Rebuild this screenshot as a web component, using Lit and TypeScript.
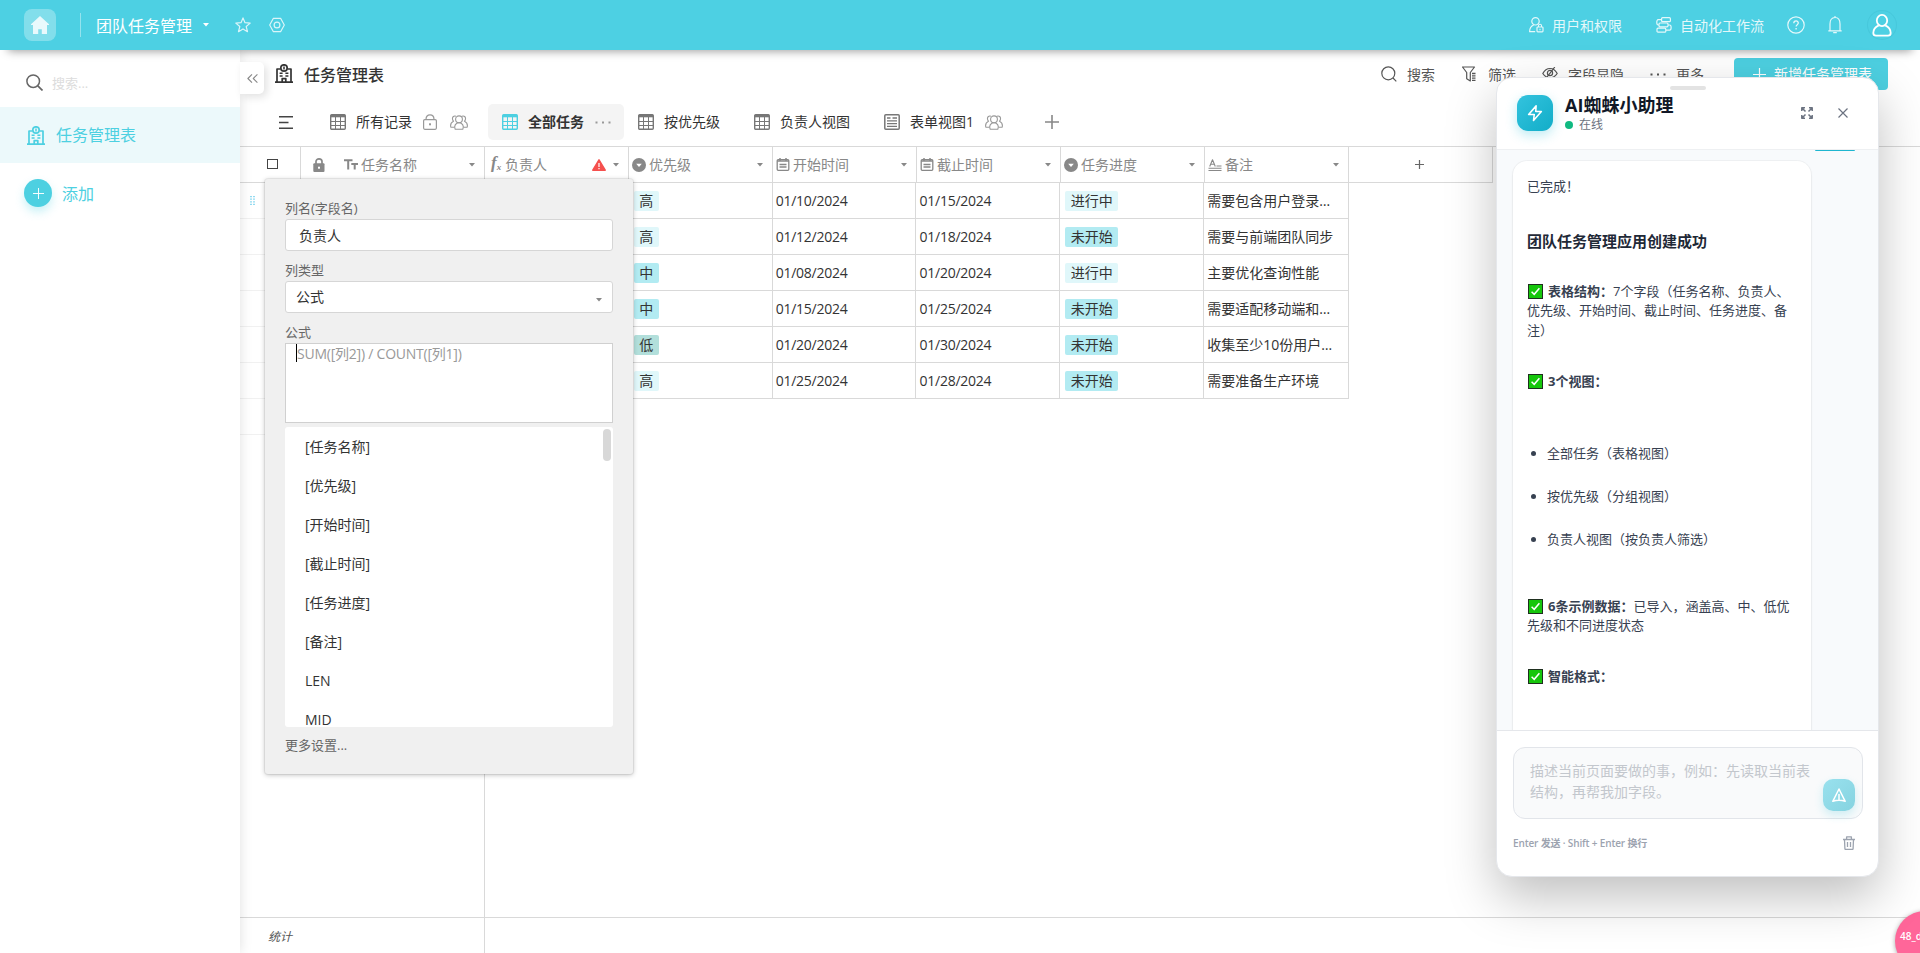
import { LitElement, html, svg, css } from "lit";
import { customElement } from "lit/decorators.js";

const ico = (w: number, h: number, vb: string, body: unknown) =>
  html`<svg width=${w} height=${h} viewBox=${vb} fill="none" stroke="currentColor" stroke-linejoin="round">${body}</svg>`;

const icons = {
  home: () => ico(18, 18, "0 0 18 18", svg`<path d="M9 0 L18 8.2 V9 H16 V18 H10.8 V13.2 H7.2 V18 H2 V9 H0 V8.2 Z" fill="currentColor" stroke="none"/>`),
  star: () => ico(16, 16, "0 0 16 16", svg`<path d="M8 .9l2 4.8 5.2.4-4 3.4 1.3 5.2L8 11.9l-4.500 2.800 1.300-5.200-4-3.400 5.200-.4z" stroke-width="1.200"/>`),
  hex: () => ico(16, 16, "0 0 16 16", svg`<path d="M4.400 1.300h7.200L15.300 8l-3.700 6.700H4.400L.7 8z" stroke-width="1.200"/><circle cx="8" cy="8" r="2.900" stroke-width="1.200"/>`),
  building: () => ico(18, 19, "0 0 18 19", svg`<g stroke-width="1.700"><path d="M0 18.100h18M2 18V5h3.400M16 18V5h-3.400M7.200 18v-3.400h3.600V18"/><circle cx="9" cy="4" r="3.200"/><path d="M9 2.400v3.200M4.600 9.200h3M10.400 9.200h3M4.600 12h3M10.400 12h3" stroke-width="1.500"/></g>`),
  search: (s = 17) => ico(s, s, "0 0 17 17", svg`<circle cx="7.200" cy="7.200" r="6.300" stroke-width="1.500"/><path d="M11.800 11.800l4.700 4.700" stroke-width="1.700"/>`),
  searchThin: () => ico(16, 16, "0 0 16 16", svg`<circle cx="7.300" cy="7.300" r="6.500" stroke-width="1.200"/><path d="M12 12l3.300 3.300" stroke-width="1.200"/>`),
  plus: (s: number, w = 1.4) => ico(s, s, "0 0 14 14", svg`<path d="M7 0v14M0 7h14" stroke-width=${w}/>`),
  collapse: () => ico(11, 9, "0 0 11 9", svg`<path d="M5 .4L.9 4.500 5 8.600M10.400.4L6.300 4.500l4.100 4.100" stroke-width="1.100"/>`),
  filter: () => ico(15, 16, "0 0 15 16", svg`<path d="M.5 1h12L8.300 6.500V15L4.700 12.800V6.500z" stroke-width="1.200"/><path d="M10 7.500h3.500M10 9.800h3.500M10 12.100h3.500M10 14.300h3.500" stroke-width="1.300"/>`),
  eye: () => ico(16, 12, "0 0 16 12", svg`<path d="M.8 6.500C2.500 3.300 5 1.500 8 1.500s5.500 1.800 7.200 5C13.500 9 11 10.800 8 10.800S2.500 9 .8 6.500z" stroke-width="1.200"/><circle cx="8" cy="6" r="2.600" stroke-width="1.200"/><path d="M12.800 0L3.500 12" stroke-width="1.200"/>`),
  dots: (s = 16) => ico(s, 3, "0 0 16 3", svg`<path d="M.5 .5h2v2h-2zM7 .5h2v2H7zM13.500.5h2v2h-2z" fill="currentColor" stroke="none"/>`),
  lines: () => ico(14, 13, "0 0 14 13", svg`<path d="M0 .75h14M0 6.500h9.500M0 12.250h14" stroke-width="1.300"/>`),
  table: () => ico(16, 16, "0 0 16 16", svg`<rect x=".7" y=".7" width="14.600" height="14.600" rx="1" stroke-width="1.400"/><path d="M1 2h14" stroke-width="2.600"/><path d="M1 7.500h14M1 11.500h14M5.500 3v12M10.500 3v12" stroke-width="1"/>`),
  form: () => ico(16, 16, "0 0 16 16", svg`<rect x=".8" y=".8" width="14.400" height="14.400" rx="1" stroke-width="1.500"/><path d="M3 4h3.500M3 6.800h10M3 9.600h10M3 12.400h10M8.500 4h4.500" stroke-width="1.300"/>`),
  lockOpen: () => ico(14, 16, "0 0 14 16", svg`<rect x=".6" y="5.600" width="12.800" height="9.700" rx="1.200" stroke-width="1.200"/><path d="M3 5.400C3 2.400 4.600.9 7 .9s4 1.500 4 4.500" stroke-width="1.200"/><rect x="6" y="9.300" width="2" height="2" fill="currentColor" stroke="none"/>`),
  people: () => ico(18, 15, "0 0 18 15", svg`<g stroke-width="1.100"><circle cx="9" cy="4.300" r="3.400"/><path d="M5.200 14.200c-1.500-3 .3-6.400 3.800-6.400s5.300 3.400 3.800 6.400z"/><path d="M6 1.300C4 .2 2.200 2 2.500 4c.1 1 .5 1.700 1 2.200C1.200 7.300.2 9.500.8 12.200h3.300M12 1.300C14 .2 15.800 2 15.500 4c-.1 1-.5 1.700-1 2.200 2.300 1.100 3.300 3.300 2.700 6h-3.300"/></g>`),
  lock: () => ico(12, 14, "0 0 12 14", svg`<rect x=".3" y="5.300" width="11.200" height="8.700" rx="1" fill="currentColor" stroke="none"/><path d="M3 6V3.600a3 2.700 0 0 1 6 0V6" stroke-width="1.700"/><rect x="5" y="8.700" width="2" height="2" fill="#fff" stroke="none"/>`),
  text: () => ico(14, 11, "0 0 14 11", svg`<path d="M0 1.200h8.500M4.200 1v9.500M7.300 4.900H14M10.700 4.900v5.600" stroke-width="2"/>`),
  select: () => ico(14, 14, "0 0 14 14", svg`<circle cx="7" cy="7" r="7" fill="currentColor" stroke="none"/><path d="M4.200 5.700h5.600L7 8.900z" fill="#fff" stroke="none"/>`),
  date: () => ico(13, 13, "0 0 13 13", svg`<rect x=".7" y="1.700" width="11.600" height="10.600" rx="1" stroke-width="1.300"/><path d="M.7 3h11.600M3.500 0v3M9.500 0v3" stroke-width="1.500"/><path d="M3 6.500h7M3 9h7" stroke-width="1.300"/>`),
  note: () => ico(13, 12, "0 0 13 12", svg`<path d="M1.200 7.500L4 .8l2.800 6.700M2.200 5.300h3.600M8 7h5M0 9.300h13M0 11.500h13" stroke-width="1.100"/>`),
  warn: () => ico(14, 12, "0 0 14 12", svg`<path d="M7 .8L13.200 11.200H.8z" fill="currentColor" stroke-width="1.500"/><path d="M7 4v4M7 9v1.200" stroke="#fff" stroke-width="1.200"/>`),
  caret: () => ico(6, 4, "0 0 6 4", svg`<path d="M0 0h6L3 3.500z" fill="currentColor" stroke="none"/>`),
  grip: () => ico(5, 9, "0 0 5 9", svg`<path d="M1 0v9M4 0v9" stroke-width="1.200" stroke-dasharray="1.200 1.400"/>`),
  userLock: () => ico(15, 16, "0 0 15 16", svg`<circle cx="6.500" cy="4.300" r="3.700" stroke-width="1.200"/><path d="M4.700 8C2 9 .6 11 .6 14.700h5.600" stroke-width="1.200"/><rect x="8" y="10" width="6" height="4.800" rx=".8" stroke-width="1.200"/><path d="M9.500 10V8.700a1.500 1.500 0 0 1 3 0V10M11 11.700v1.500" stroke-width="1.100"/>`),
  flow: () => ico(16, 16, "0 0 16 16", svg`<g stroke-width="1.200"><rect x="5.600" y=".7" width="8.800" height="4" rx="1"/><rect x="3" y="6" width="9" height="3.800" rx="1"/><rect x="1" y="11.200" width="8.800" height="4" rx="1"/><path d="M5.500 2.700H2.200C.3 2.700.3 8 2.200 8H3M12 8h1.700c1.900 0 1.900 5.200 0 5.200H10"/></g>`),
  help: () => ico(18, 18, "0 0 18 18", svg`<circle cx="9" cy="9" r="8.200" stroke-width="1.200"/><path d="M6.800 7.200c0-3 4.500-3 4.500-.2 0 1.700-2.200 1.700-2.200 3.600M9.100 12v1.400" stroke-width="1.300"/>`),
  bell: () => ico(14, 18, "0 0 14 18", svg`<path d="M.3 14.800h13.400M2 14.600V8c0-4 1.600-6.500 5-6.500S12 4 12 8v6.600M7 0v1.500M5.200 16.700h3.600" stroke-width="1.200"/>`),
  user: () => ico(20, 23, "0 0 20 23", svg`<ellipse cx="10" cy="6.500" rx="5.200" ry="5.600" stroke-width="1.800"/><path d="M6.800 11.300C3.300 12.800 1.300 15.500 1.300 19c0 2 .8 2.700 2.700 2.700h12c1.900 0 2.700-.7 2.700-2.700 0-3.500-2-6.200-5.500-7.700" stroke-width="1.800"/>`),
  bolt: () => ico(18, 18, "0 0 24 24", svg`<path d="M13.500 2.500L3.500 14H11l-1 8L20.500 10H13z" stroke-width="2.100" stroke-linecap="round"/>`),
  expand: () => ico(12, 12, "0 0 12 12", svg`<path d="M.8 4V.8H4M8 .8h3.200V4M11.200 8v3.200H8M4 11.200H.8V8M1 1l3.500 3.500M11 1L7.500 4.500M11 11L7.500 7.500M1 11l3.500-3.500" stroke-width="1.500"/>`),
  close: () => ico(10, 10, "0 0 10 10", svg`<path d="M.5.5l9 9M9.500.5l-9 9" stroke-width="1.200"/>`),
  check: () => html`<svg class="emoji" role="img" aria-label="✅" width="15" height="15" viewBox="0 0 15 15"><rect x=".5" y=".5" width="14" height="14" fill="#16c60c" stroke="#1f2f1f"/><path d="M3.600 7.800l2.600 2.500 5.200-6" fill="none" stroke="#fff" stroke-width="1.500"/></svg>`,
  send: () => ico(14, 15, "0 0 14 15", svg`<path d="M7 1L13.200 13.300C9 12 5 12 .8 13.300zM7 6v6" stroke-width="1.500"/>`),
  trash: () => ico(12, 14, "0 0 12 14", svg`<path d="M0 3.500h12M1.500 3.500l.4 9c0 .7.400 1 1 1h6.200c.6 0 1-.3 1-1l.4-9M3.600 3.300V.9h4.800v2.400M4.500 6v5M7.500 6v5" stroke-width="1.300"/>`),
};

const FONT = css`"Open Sans", "Noto Sans CJK SC", sans-serif`;

@customElement("top-bar")
class TopBar extends LitElement {
  static styles = css`
    :host { display: flex; align-items: center; height: 50px; box-sizing: border-box; padding: 0 24px; background: #4dd0e3; color: #fff; font: 16px/24px ${FONT}; }
    svg { display: block; flex: none; }
    .home { display: grid; place-items: center; width: 32px; height: 32px; border-radius: 8px; background: rgba(255,255,255,.3); color: #e8f9fc; }
    .sep { width: 1px; height: 24px; margin: 0 15px 0 24px; background: rgba(255,255,255,.4); }
    .name { margin-top: 2px; }
    .caret { margin: 0 26px 0 11px; }
    .dim { opacity: .8; margin-right: 18px; }
    .links { margin-left: auto; display: flex; align-items: center; font-size: 14px; opacity: .85; }
    .links span { margin: 2px 34px 0 8px; }
    .links .last { margin-right: 23px; }
    .bell { margin: 0 26px 0 23px; }
    .avatar { display: grid; place-items: center; width: 28px; height: 28px; border-radius: 50%; box-shadow: 0 0 0 1px rgba(0,120,140,.09); }
  `;
  render() {
    return html`
      <div class="home">${icons.home()}</div><div class="sep"></div>
      <div class="name">团队任务管理</div><div class="caret">${icons.caret()}</div>
      <div class="dim">${icons.star()}</div><div class="dim">${icons.hex()}</div>
      <div class="links">
        ${icons.userLock()}<span>用户和权限</span>
        ${icons.flow()}<span class="last">自动化工作流</span>
        ${icons.help()}<div class="bell">${icons.bell()}</div>
      </div>
      <div class="avatar">${icons.user()}</div>`;
  }
}

@customElement("side-nav")
class SideNav extends LitElement {
  static styles = css`
    :host { display: block; width: 240px; flex: none; background: #fff; font: 16px/24px ${FONT}; color: #4dd0e1; }
    svg { display: block; }
    .row { display: flex; align-items: center; }
    .search { height: 57px; padding: 7px 0 0 26px; box-sizing: border-box; gap: 9px; color: #666; }
    .search span { font-size: 13px; color: #dcdcdc; margin-top: 2px; }
    .item { height: 56px; padding-left: 27px; gap: 11px; background: #ecf9fb; }
    .add { padding: 16px 0 0 24px; gap: 10px; }
    .dot { width: 28px; height: 28px; border-radius: 50%; background: #4dd0e1; color: #fff; display: grid; place-items: center; box-shadow: 0 5px 10px rgba(77,208,225,.3); }
    .add span { margin-top: 1px; }
  `;
  render() {
    return html`
      <div class="row search">${icons.search()}<span>搜索...</span></div>
      <div class="row item">${icons.building()}<span>任务管理表</span></div>
      <div class="row add"><div class="dot">${icons.plus(11, 1.2)}</div><span>添加</span></div>`;
  }
}

type Row = [string, string, string, string, string];
const ROWS: Row[] = [
  ["高", "01/10/2024", "01/15/2024", "进行中", "需要包含用户登录、注册"],
  ["高", "01/12/2024", "01/18/2024", "未开始", "需要与前端团队同步"],
  ["中", "01/08/2024", "01/20/2024", "进行中", "主要优化查询性能"],
  ["中", "01/15/2024", "01/25/2024", "未开始", "需要适配移动端和桌面端"],
  ["低", "01/20/2024", "01/30/2024", "未开始", "收集至少10份用户反馈"],
  ["高", "01/25/2024", "01/28/2024", "未开始", "需要准备生产环境"],
];
const TONE: Record<string, string> = { 高: "light", 进行中: "light", 中: "mid", 未开始: "mid", 低: "deep" };

@customElement("task-grid")
class TaskGrid extends LitElement {
  static styles = css`
    :host { display: flex; flex-direction: column; flex: 1; border-top: 1px solid #d9d9d9; font: 14px/20px ${FONT}; color: #333; min-height: 0; }
    svg { display: block; flex: none; }
    .body { flex: 1; display: flex; }
    .fixed { width: 244px; border-right: 1px solid #d9d9d9; }
    .head { display: flex; height: 35px; border-bottom: 1px solid #d9d9d9; color: #888; }
    .pick { width: 61px; border-right: 1px solid #d9d9d9; display: flex; box-sizing: border-box; padding: 12px 0 0 27px; }
    .box { width: 9px; height: 8px; border: 1px solid #444; }
    .h { display: flex; align-items: center; box-sizing: border-box; padding: 0 9px 0 3px; gap: 3px; border-right: 1px solid #d9d9d9; }
    .h > svg:first-child { width: 14px; color: #888; }
    .h span { flex: 1; }
    .h .fx { font: italic 600 17px/20px "Liberation Serif", serif; flex: none; width: 14px; padding-left: 3px; box-sizing: border-box; white-space: nowrap; }
    .fx sub { font-size: 9px; vertical-align: -2px; }
    .warn { color: #f5504e; margin-right: 4px; }
    .name { flex: 1; padding-left: 11px; border: 0; }
    .name .gap { flex: none; width: 12px; }
    .blank { height: 35px; border-bottom: 1px solid #f1f1f1; display: flex; align-items: center; padding-left: 10px; color: #4dc4e8; }
    .cols { flex: 1; }
    .cols .head { width: 1008px; }
    .cols .h, .r > div { width: 144px; }
    .cols .h:last-child { justify-content: center; padding: 0 2px 0 0; color: #666; }
    .cols .h:last-child > svg { width: 9px; color: #666; }
    .r { display: flex; width: 863px; height: 35px; border-bottom: 1px solid #d9d9d9; border-right: 1px solid #d9d9d9; }
    .r > div { box-sizing: border-box; border-right: 1px solid #d9d9d9; padding: 8px 12px 0 3px; white-space: nowrap; overflow: hidden; text-overflow: ellipsis; }
    .r > div:last-child { border: 0; }
    .r .num { letter-spacing: -.25px; }
    .r .tg { padding-left: 5px; }
    .tag { display: inline-block; height: 20px; padding: 0 5.500px; border-radius: 2px; }
    .light { background: #e0f7fa; } .mid { background: #b2ebf2; } .deep { background: #b2dfdb; }
    .foot { display: flex; height: 35px; border-top: 1px solid #d9d9d9; font: italic 12px/37px ${FONT}; color: #555; }
    .foot .fixed { box-sizing: border-box; width: 245px; padding-left: 28px; }
  `;
  head(icon: unknown, label: string, warn = false) {
    return html`<div class="h">${icon}<span>${label}</span>${warn ? html`<div class="warn">${icons.warn()}</div>` : ""}${icons.caret()}</div>`;
  }
  render() {
    return html`
      <div class="body">
        <div class="fixed">
          <div class="head"><div class="pick"><div class="box"></div></div>
            <div class="h name">${icons.lock()}<div class="gap"></div>${icons.text()}<span>任务名称</span>${icons.caret()}</div></div>
          ${[0, 1, 2, 3, 4, 5, 6].map((i) => html`<div class="blank">${i === 0 ? icons.grip() : ""}</div>`)}
        </div>
        <div class="cols">
          <div class="head">
            ${this.head(html`<div class="fx">f<sub>x</sub></div>`, "负责人", true)}
            ${this.head(icons.select(), "优先级")}${this.head(icons.date(), "开始时间")}
            ${this.head(icons.date(), "截止时间")}${this.head(icons.select(), "任务进度")}
            ${this.head(icons.note(), "备注")}
            <div class="h">${icons.plus(9, 1.9)}</div>
          </div>
          ${ROWS.map(([p, a, b, s, n]) => html`<div class="r"><div></div>
            <div class="tg"><span class="tag ${TONE[p]}">${p}</span></div>
            <div class="num">${a}</div><div class="num">${b}</div>
            <div class="tg"><span class="tag ${TONE[s]}">${s}</span></div><div>${n}</div></div>`)}
        </div>
      </div>
      <div class="foot"><div class="fixed">统计</div></div>`;
  }
}

@customElement("field-editor")
class FieldEditor extends LitElement {
  static styles = css`
    :host { display: block; box-sizing: border-box; width: 368px; height: 595px; padding: 19px 20px 0 20px; background: #f0f0f0; border-radius: 3px; box-shadow: 0 0 0 1px rgba(0,0,0,.05), 0 1px 5px rgba(0,0,0,.25); font: 14px/20px ${FONT}; color: #333; }
    .label { font-size: 13px; color: #666; height: 21px; line-height: 20px; }
    .field { box-sizing: border-box; height: 32px; border: 1px solid #d6d6d6; border-radius: 3px; background: #fff; padding: 6px 11px 0 13px; margin-bottom: 9px; display: flex; justify-content: space-between; }
    .sel { padding: 5px 10px 0; }
    .sel svg { margin-top: 11px; color: #888; }
    .area { box-sizing: border-box; height: 80px; border: 1px solid #d0d0d0; background: #fff; color: #999; padding-left: 10px; }
    .area span { display: inline-block; border-left: 1px solid #000; height: 18px; line-height: 20px; letter-spacing: -.23px; }
    .listing { margin-top: 4px; height: 300px; box-sizing: border-box; background: #fff; border-radius: 3px; overflow: hidden; display: flex; justify-content: space-between; padding: 2px 2px 0 20px; }
    .listing .o { height: 39px; line-height: 35px; color: #333; }
    .bar { width: 8px; height: 32px; border-radius: 4px; background: #d8d8d8; }
    .more { margin-top: 8px; font-size: 13px; color: #666; }
  `;
  render() {
    return html`
      <div class="label">列名(字段名)</div><div class="field">负责人</div>
      <div class="label">列类型</div><div class="field sel">公式${icons.caret()}</div>
      <div class="label">公式</div><div class="area"><span>SUM([列2]) / COUNT([列1])</span></div>
      <div class="listing"><div>${["[任务名称]", "[优先级]", "[开始时间]", "[截止时间]", "[任务进度]", "[备注]", "LEN", "MID"].map((o) => html`<div class="o">${o}</div>`)}</div><div class="bar"></div></div>
      <div class="more">更多设置...</div>`;
  }
}

@customElement("ai-assistant")
class AiAssistant extends LitElement {
  static styles = css`
    :host { display: flex; flex-direction: column; box-sizing: border-box; width: 383px; height: 800px; background: #fff; border: 1px solid #e5e7eb; border-radius: 16px; overflow: hidden; box-shadow: 0 20px 50px rgba(0,0,0,.25); font: 13px/19.5px ${FONT}; color: #374151; }
    svg { display: block; flex: none; }
    .head { height: 71px; border-bottom: 1px solid #eef0f2; display: grid; grid-template-rows: 16px 1fr; }
    .handle { width: 36px; height: 4px; border-radius: 2px; background: #e3e3e3; margin: 8px auto 0; }
    .bar { display: flex; align-items: flex-start; padding: 1px 30px 0 20px; gap: 12px; }
    .logo { width: 36px; height: 36px; border-radius: 11px; background: linear-gradient(135deg, #33c3de, #12adc8); color: #fff; display: grid; place-items: center; box-shadow: 0 4px 12px rgba(34,190,215,.3); }
    .who { flex: 1; }
    .title { font-weight: 700; font-size: 18px; line-height: 20px; color: #111827; }
    .state { display: flex; align-items: center; gap: 6px; font-size: 12px; line-height: 20px; color: #6b7280; }
    .state i { width: 8px; height: 8px; border-radius: 50%; background: #10b981; }
    .acts { display: flex; gap: 25px; align-items: center; color: #6b7280; height: 36px; }
    .chat { height: 580px; background: #f8fafc; overflow: hidden; padding: 0 15px 0 16px; }
    .mine { width: 40px; height: 1px; margin: 0 8px 0 auto; border-radius: 0 0 20px 20px; background: #1fb6d0; }
    .bubble { margin-top: 10px; box-sizing: border-box; width: 298px; height: 640px; padding: 16px 14px; background: #fff; border-radius: 14px; box-shadow: 0 0 0 1px rgba(0,0,0,.03), 0 1px 3px rgba(0,0,0,.06); white-space: nowrap; }
    p, h3, ul { margin: 0; padding: 0; }
    h3 { font-size: 15px; line-height: 22px; color: #1f2937; margin: 33px 0 30px; font-weight: 700; }
    .gap1 { margin-top: 32px; } .gap4 { margin-top: 31px; }
    .emoji { display: inline-block; vertical-align: -3px; margin: 0 5px 0 1px; }
    ul { margin: 40px 0 0 20px; }
    li { height: 43px; line-height: 43px; }
    .g3 { margin-top: 36px; }
    .foot { flex: 1; border-top: 1px solid #e5e7eb; padding: 16px 15px 0 16px; }
    .input { height: 72px; box-sizing: border-box; display: flex; justify-content: space-between; border: 1px solid #e2e5ea; border-radius: 12px; background: #f9fafb; padding: 12px 7px 7px 16px; font-size: 14px; line-height: 21px; color: #c3c7cd; white-space: nowrap; }
    .send { align-self: flex-end; width: 32px; height: 32px; border-radius: 10px; background: linear-gradient(135deg, #99e1ee, #85d3e0); color: #fff; display: grid; place-items: center; box-shadow: 0 4px 10px rgba(34,190,215,.2); }
    .hint { display: flex; justify-content: space-between; align-items: center; padding: 14px 8px 0 0; font-size: 10px; line-height: 20px; font-weight: 600; color: #9ca3af; letter-spacing: -.15px; }
  `;
  render() {
    return html`
      <div class="head"><div class="handle"></div>
        <div class="bar"><div class="logo">${icons.bolt()}</div>
          <div class="who"><div class="title">AI蜘蛛小助理</div><div class="state"><i></i>在线</div></div>
          <div class="acts">${icons.expand()}${icons.close()}</div></div></div>
      <div class="chat"><div class="mine"></div>
        <div class="bubble">
          <p>已完成！</p>
          <h3>团队任务管理应用创建成功</h3>
          <p>${icons.check()}<b>表格结构：</b>7个字段（任务名称、负责人、<br>优先级、开始时间、截止时间、任务进度、备<br>注）</p>
          <p class="gap1">${icons.check()}<b>3个视图：</b></p>
          <ul><li>全部任务（表格视图）</li><li>按优先级（分组视图）</li><li>负责人视图（按负责人筛选）</li></ul>
          <p class="g3">${icons.check()}<b>6条示例数据：</b>已导入，涵盖高、中、低优<br>先级和不同进度状态</p>
          <p class="gap4">${icons.check()}<b>智能格式：</b></p>
        </div></div>
      <div class="foot"><div class="input"><div>描述当前页面要做的事，例如：先读取当前表<br>结构，再帮我加字段。</div><div class="send">${icons.send()}</div></div>
        <div class="hint">Enter 发送 · Shift + Enter 换行${icons.trash()}</div></div>`;
  }
}

@customElement("app-root")
class AppRoot extends LitElement {
  static styles = css`
    :host { display: flex; flex-direction: column; position: relative; width: 1920px; height: 953px; overflow: hidden; background: #fff; font: 14px/20px ${FONT}; color: #333; }
    svg { display: block; flex: none; }
    top-bar { flex: none; position: relative; z-index: 3; }
    .shade { position: absolute; z-index: 2; left: 8px; right: 8px; top: 0; height: 50px; box-shadow: 0 1px 9px rgba(0,0,0,.4); }
    .page { flex: 1; display: flex; min-height: 0; }
    side-nav { position: relative; z-index: 1; box-shadow: 0 0 12px rgba(0,0,0,.13); }
    .main { flex: 1; display: flex; flex-direction: column; min-width: 0; }
    .title { display: flex; height: 48px; }
    .fold { width: 24px; height: 32px; margin-top: 12px; border-radius: 0 5px 5px 0; background: #fff; box-shadow: 3px 3px 8px rgba(0,0,0,.12); display: grid; place-items: center; color: #888; position: relative; z-index: 1; }
    .t { display: flex; gap: 11px; font-size: 16px; font-weight: 500; margin: 14px 0 0 11px; }
    .t span { line-height: 22px; }
    .tools { margin-left: auto; display: flex; align-items: flex-start; color: #555; }
    .tools > span { margin: 15px 26px 0 11px; line-height: 20px; }
    .tools > svg { margin-top: 16px; }
    .tools .a { margin-right: 27px; } .tools .b { margin-left: 10px; } .tools .m { margin-left: 10px; margin-right: 30px; }
    .eye { padding-top: 17px; } .dots { padding-top: 23px; }
    .new { width: 154px; height: 32px; margin: 8px 32px 0 0; border-radius: 4px; background: #4dd0e1; color: #fff; display: flex; align-items: center; gap: 8px; padding-left: 19px; box-sizing: border-box; }
    .tabs { display: flex; align-items: center; height: 48px; padding-left: 39px; }
    .menu { margin-right: 23px; color: #444; }
    .tab { display: flex; align-items: center; height: 36px; padding: 0 20px 0 14px; gap: 10px; border-radius: 5px; color: #333; }
    .tab svg { color: #777; }
    .tab .side { margin-left: 1px; }
    .tab .side + .side { margin-left: 3px; }
    .tab .side svg { color: #999; }
    .tab.on { background: #f4f4f4; font-weight: 700; padding-right: 13px; }
    .tab.on svg { color: #4dd0e1; } .tab.on .side svg { color: #999; }
    .addtab { color: #888; margin-left: 22px; }
    field-editor { position: absolute; left: 265px; top: 179px; z-index: 4; }
    ai-assistant { position: absolute; left: 1496px; top: 77px; z-index: 5; }
    .ball { position: absolute; left: 1895px; top: 911px; width: 60px; height: 60px; border-radius: 50%; background: #ff6699; color: #fff; font: 600 10px/50px ${FONT}; padding-left: 5px; box-sizing: border-box; z-index: 4; box-shadow: 0 1px 5px rgba(0,0,0,.35); }
  `;
  tab(icon: unknown, label: string, side: unknown[] = [], on = false) {
    return html`<div class="tab ${on ? "on" : ""}">${icon}<span>${label}</span>${side.map((s) => html`<div class="side">${s}</div>`)}</div>`;
  }
  render() {
    return html`
      <top-bar></top-bar><div class="shade"></div>
      <div class="page">
        <side-nav></side-nav>
        <div class="main">
          <div class="title"><div class="fold">${icons.collapse()}</div>
            <div class="t">${icons.building()}<span>任务管理表</span></div>
            <div class="tools">
              ${icons.searchThin()}<span class="b a">搜索</span>
              ${icons.filter()}<span>筛选</span>
              <div class="eye">${icons.eye()}</div><span class="b">字段显隐</span>
              <div class="dots">${icons.dots()}</div><span class="m">更多</span>
              <div class="new">${icons.plus(13, 1.3)}新增任务管理表</div>
            </div></div>
          <div class="tabs"><div class="menu">${icons.lines()}</div>
            ${this.tab(icons.table(), "所有记录", [icons.lockOpen(), icons.people()])}
            ${this.tab(icons.table(), "全部任务", [icons.dots()], true)}
            ${this.tab(icons.table(), "按优先级")}
            ${this.tab(icons.table(), "负责人视图")}
            ${this.tab(icons.form(), "表单视图1", [icons.people()])}
            <div class="addtab">${icons.plus(14, 1.6)}</div></div>
          <task-grid></task-grid>
        </div>
      </div>
      <field-editor></field-editor>
      <ai-assistant></ai-assistant>
      <div class="ball">48_d</div>`;
  }
}
